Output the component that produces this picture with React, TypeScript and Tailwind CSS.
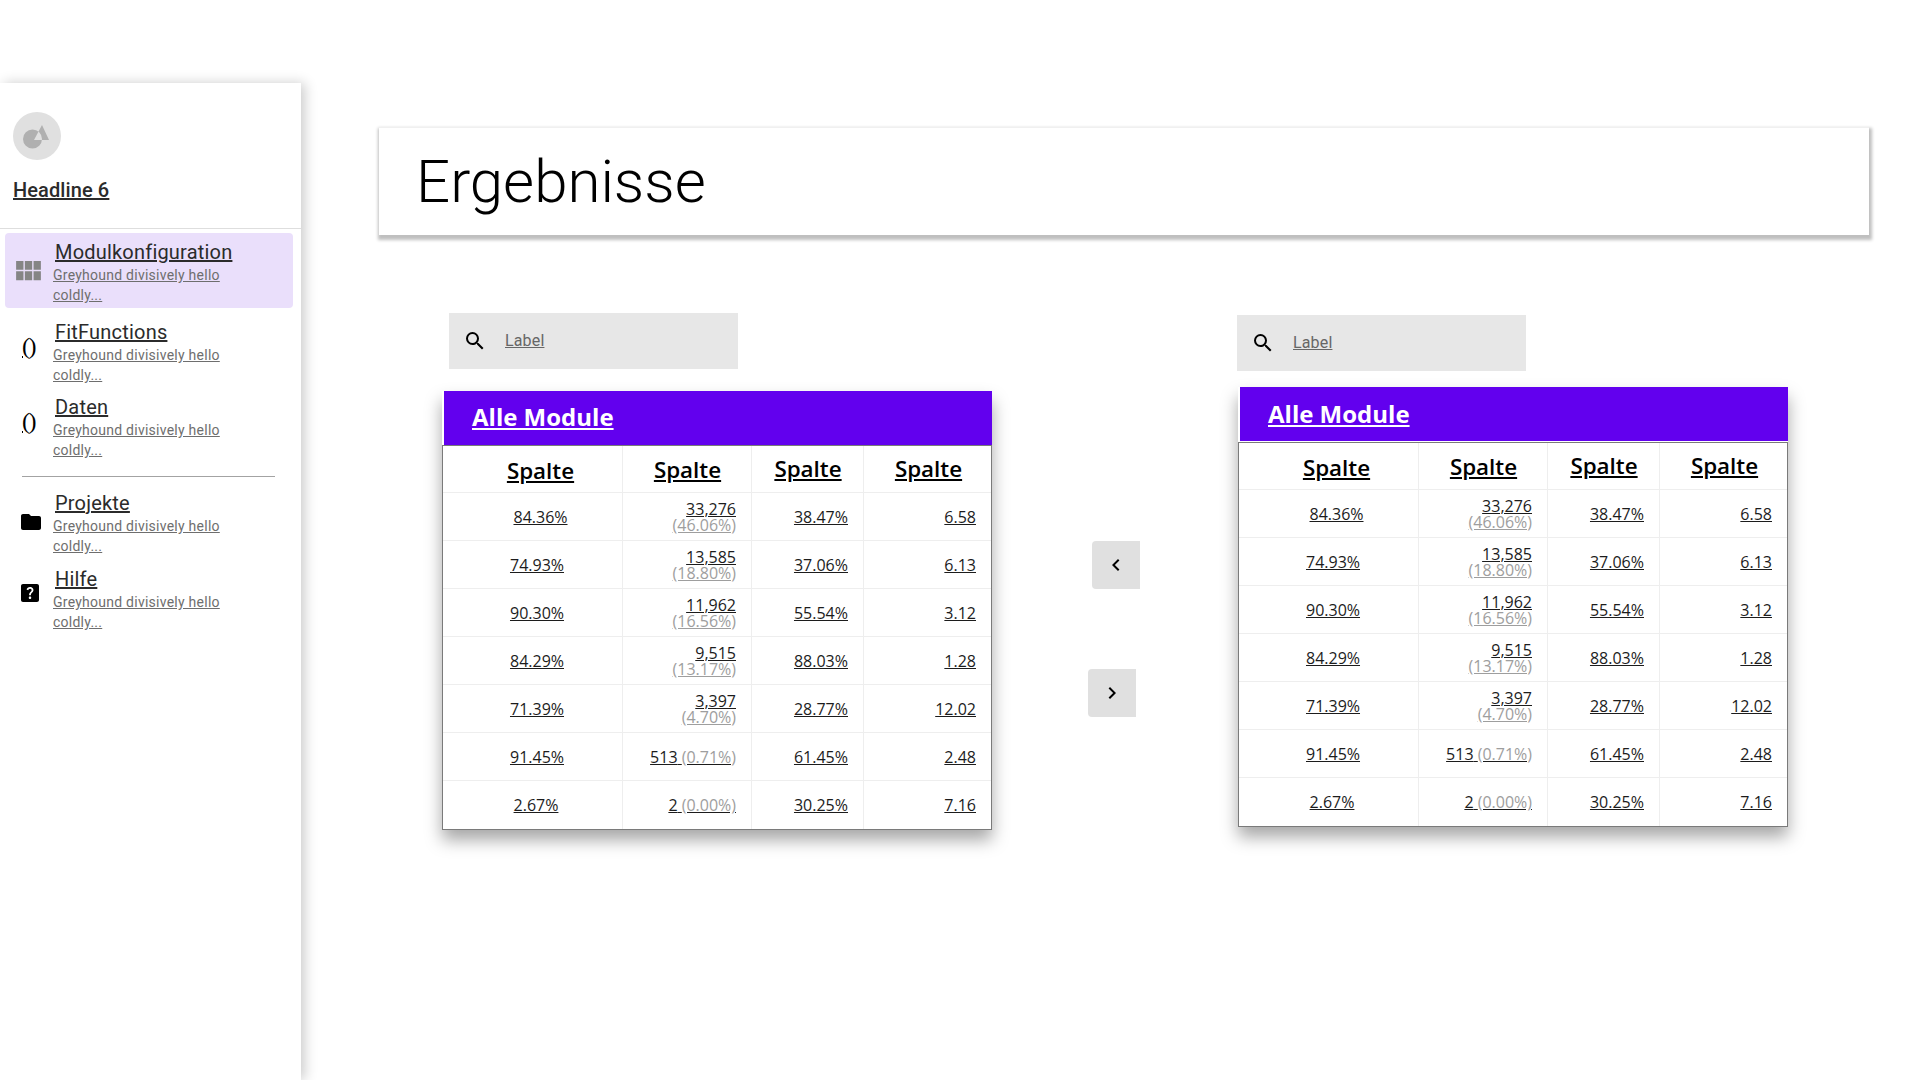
import React from 'react';
import { MdFolder, MdHelpCenter, MdSearch, MdViewModule, MdChevronLeft, MdChevronRight } from 'react-icons/md';

const rows = [
  { a: '84.36%', b: '33,276', pct: '(46.06%)', c: '38.47%', d: '6.58', stacked: true },
  { a: '74.93%', b: '13,585', pct: '(18.80%)', c: '37.06%', d: '6.13', stacked: true },
  { a: '90.30%', b: '11,962', pct: '(16.56%)', c: '55.54%', d: '3.12', stacked: true },
  { a: '84.29%', b: '9,515', pct: '(13.17%)', c: '88.03%', d: '1.28', stacked: true },
  { a: '71.39%', b: '3,397', pct: '(4.70%)', c: '28.77%', d: '12.02', stacked: true },
  { a: '91.45%', b: '513', pct: '(0.71%)', c: '61.45%', d: '2.48', stacked: false },
  { a: '2.67%', b: '2', pct: '(0.00%)', c: '30.25%', d: '7.16', stacked: false },
];

const parens = (
  <span className="font-['Liberation_Serif',serif] text-[24px] leading-none tracking-[-1.5px] underline text-black ml-[6px] mb-[7px]">()</span>
);

const navTop = [
  { title: 'Modulkonfiguration', icon: <MdViewModule className="w-[33px] h-[33px] shrink-0 text-[#858585] -ml-[4px]" />, active: true },
  { title: 'FitFunctions', icon: parens },
  { title: 'Daten', icon: parens },
];

const navBottom = [
  { title: 'Projekte', icon: <MdFolder className="w-6 h-6 text-black ml-[3px] mt-[4px]" /> },
  { title: 'Hilfe', icon: <MdHelpCenter className="w-6 h-6 text-black ml-[2px] mb-[6px]" /> },
];

function NavItem({ title, icon, active }: { title: string; icon: React.ReactNode; active?: boolean }) {
  return (
    <div className={`flex h-[75px] w-[288px] ml-[5px] rounded-[4px] pl-[11px] ${active ? 'bg-[#eadffb]' : ''}`}>
      <div className="w-[37px] shrink-0 flex items-center h-[72px] pt-[2px]">{icon}</div>
      <div className={active ? 'pt-[7px]' : 'pt-[8px]'}>
        <div className="ml-[2px] text-[20px] leading-[24px] tracking-[0.2px] text-[#2b2b2b] underline">{title}</div>
        <div className="mt-px w-[190px] text-[14px] leading-[20px] tracking-[0.25px] text-[#6e6e6e] underline">
          Greyhound divisively hello coldly...
        </div>
      </div>
    </div>
  );
}

function Sidebar() {
  return (
    <aside className="w-[301px] h-[997px] mt-[83px] shrink-0 bg-white shadow-[4px_0_12px_rgba(0,0,0,0.2)] font-['Roboto',sans-serif]">
      <div className="h-[146px] border-b border-[#dedede] px-[13px] pt-[29px]">
        <div className="w-12 h-12 rounded-full bg-[#e0e0e0]">
          {/* even-odd so the overlap of circle and triangle shows the background */}
          <svg width="48" height="48" viewBox="0 0 48 48" fill="#b0b0b0" fillRule="evenodd">
            <path d="M29 13 L21 28 L36 28 Z M10 27 A9.5 9.5 0 1 0 29 27 A9.5 9.5 0 1 0 10 27 Z" />
          </svg>
        </div>
        <div className="mt-[18px] text-[20px] leading-[24px] tracking-[0.1px] font-medium text-[#2b2b2b] underline">Headline 6</div>
      </div>
      <div className="pt-[4px] flex flex-col gap-[4px]">
        <NavItem {...navTop[0]} />
        <div>
          <NavItem {...navTop[1]} />
          <NavItem {...navTop[2]} />
        </div>
      </div>
      <div className="mt-[14px] mb-[6px] ml-[22px] w-[253px] border-t border-[#a3a3a3]" />
      <div className="flex flex-col gap-[1px]">
        <NavItem {...navBottom[0]} />
        <NavItem {...navBottom[1]} />
      </div>
    </aside>
  );
}

function SearchBox({ className }: { className: string }) {
  return (
    <div className={`flex items-center w-[289px] h-[56px] bg-[#e7e7e7] pl-[14px] ${className}`}>
      <MdSearch className="w-6 h-6 text-black shrink-0" />
      <span className="ml-[18px] text-[16px] text-[#666666] underline font-['Roboto',sans-serif] tracking-[0.15px]">Label</span>
    </div>
  );
}

const colClass = 'grid grid-cols-[180px_129px_112px_127px]';

function firstCellPad(i: number) {
  if (i === 0) return 'pl-[16px]';
  if (i === rows.length - 1) return 'pl-[7px]';
  return 'pl-[9px]';
}

function DataTable({ className }: { className: string }) {
  return (
    <div className={`w-[550px] bg-white border border-[#7a7a7a] font-['Open_Sans',sans-serif] text-[#1c1c1c] ${className}`}>
      <div className={`${colClass} h-[47px] border-b border-[#eeeeee] text-[22.4px] font-semibold text-black underline`}>
        <div className="flex items-center justify-center pl-[16px] pt-[4px] border-r border-[#eeeeee]">Spalte</div>
        <div className="flex items-center justify-center pl-[1px] pt-[2px] border-r border-[#eeeeee]">Spalte</div>
        <div className="flex items-center justify-center pl-[1px] border-r border-[#eeeeee]">Spalte</div>
        <div className="flex items-center justify-center pl-[2px]">Spalte</div>
      </div>
      {rows.map((r, i) => (
        <div key={r.a} className={`${colClass} h-[48px] text-[16px] leading-[16px] ${i < rows.length - 1 ? 'border-b border-[#eeeeee]' : ''}`}>
          <div className={`flex items-center justify-center border-r border-[#eeeeee] ${firstCellPad(i)}`}>
            <span className="underline">{r.a}</span>
          </div>
          <div className="flex items-center justify-end text-right pr-[15px] border-r border-[#eeeeee]">
            {r.stacked ? (
              <div>
                <div className="underline">{r.b}</div>
                <div className="underline text-[#9e9e9e]">{r.pct}</div>
              </div>
            ) : (
              <div className="underline">
                {r.b} <span className="text-[#9e9e9e]">{r.pct}</span>
              </div>
            )}
          </div>
          <div className="flex items-center justify-end pr-[15px] border-r border-[#eeeeee]">
            <span className="underline">{r.c}</span>
          </div>
          <div className="flex items-center justify-end pr-[15px]">
            <span className="underline">{r.d}</span>
          </div>
        </div>
      ))}
    </div>
  );
}

function ModulePanel({ searchClass, headerClass, titleClass, tableClass }: { searchClass: string; headerClass: string; titleClass: string; tableClass: string }) {
  return (
    <div className="w-[550px] shrink-0">
      <SearchBox className={searchClass} />
      <div className={`shadow-[0_10px_16px_rgba(0,0,0,0.35)] ${headerClass}`}>
        <div className={`ml-[2px] w-[548px] h-[54px] bg-[#6200ee] pl-[28px] flex items-center font-['Open_Sans',sans-serif] text-[24px] font-bold text-white underline ${titleClass}`}>
          Alle Module
        </div>
        <DataTable className={tableClass} />
      </div>
    </div>
  );
}

export default function App() {
  return (
    <div className="flex w-full h-[1080px] overflow-hidden bg-white">
      <Sidebar />
      <main className="flex-1 pt-[127px]">
        <div className="ml-[78px] w-[1490px] h-[108px] bg-white border-t border-[#f0f0f0] shadow-[1px_3px_3px_2px_rgba(0,0,0,0.25)] pl-[37px] flex items-center font-['Roboto',sans-serif] font-light text-[60px] text-black">
          Ergebnisse
        </div>
        <div className="flex items-start mt-[78px] ml-[141px]">
          <ModulePanel searchClass="ml-[7px]" headerClass="mt-[22px]" titleClass="pb-[2px]" tableClass="" />
          <div className="w-[246px] shrink-0 pt-[228px] flex flex-col">
            <button className="ml-[100px] w-12 h-12 bg-[#e0e0e0] rounded-l-[4px] flex items-center justify-center text-black">
              <MdChevronLeft className="w-6 h-6" />
            </button>
            <button className="ml-[96px] mt-[80px] w-12 h-12 bg-[#e0e0e0] rounded-l-[4px] flex items-center justify-center text-black">
              <MdChevronRight className="w-6 h-6" />
            </button>
          </div>
          <div className="mt-[2px]">
            <ModulePanel searchClass="-ml-px" headerClass="mt-[16px]" titleClass="" tableClass="mt-px" />
          </div>
        </div>
      </main>
    </div>
  );
}
